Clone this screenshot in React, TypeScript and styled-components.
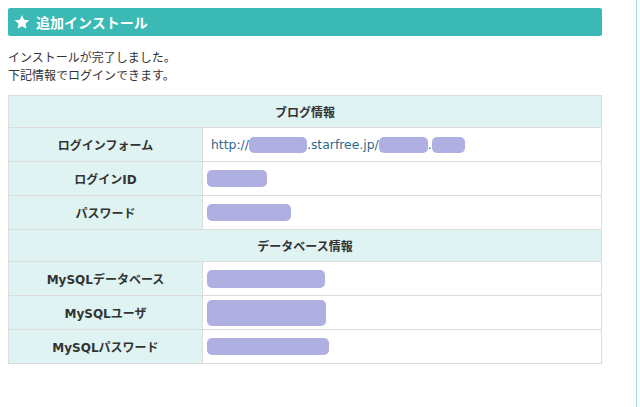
import styled, {createGlobalStyle} from "styled-components";

const GlobalStyle = createGlobalStyle`
  html, body {
    margin: 0;
    padding: 0;
    background: #fff;
  }
  body {
    font-family: "DejaVu Sans", "Noto Sans CJK JP", sans-serif;
    color: #333;
  }
`;

const Page = styled.div`
  display: flex;
  height: 407px;
  overflow: hidden;
`;

const Main = styled.div`
  width: 594px;
  margin: 8px 0 0 8px;
`;

const SideEdge = styled.div`
  flex: 1;
  margin-left: 34px;
  border-left: 1px solid #a6d9e0;
`;

const Heading = styled.h2`
  display: flex;
  align-items: center;
  gap: 6px;
  height: 28px;
  margin: 0;
  padding: 0 6px;
  background: #3bb9b5;
  border-radius: 2px;
  color: #fff;
  font-size: 14px;
  font-weight: bold;
  font-family: "Noto Sans CJK JP", sans-serif;
`;

const Message = styled.p`
  margin: 12px 0 11px;
  font-size: 12px;
  line-height: 18px;
  font-family: "Noto Sans CJK JP", sans-serif;
  color: #333;
`;

const InfoTable = styled.table`
  width: 100%;
  border-collapse: collapse;
  font-size: 12px;
`;

const SectionCell = styled.th`
  height: 31px;
  padding: 0;
  background: #dff3f2;
  border: 1px solid #dcdcdc;
  text-align: center;
  font-weight: bold;
  color: #333;
`;

const LabelCell = styled.th`
  width: 193px;
  height: 33px;
  padding: 0;
  background: #dff3f2;
  border: 1px solid #dcdcdc;
  text-align: center;
  font-weight: bold;
  color: #333;
`;

const ValueCell = styled.td`
  height: 33px;
  padding: 0 4px;
  background: #fff;
  border: 1px solid #dcdcdc;
  vertical-align: middle;
`;

const UrlLine = styled.span`
  display: inline-flex;
  align-items: center;
  padding-left: 4px;
  color: #2f6a8c;
  font-size: 12.4px;
`;

const Blur = styled.span<{$w: number; $h?: number}>`
  display: inline-block;
  vertical-align: middle;
  width: ${(p) => p.$w}px;
  height: ${(p) => p.$h ?? 17}px;
  background: #afafe1;
  border-radius: 5px;
`;

const Star = () => (
  <svg width="16" height="16" viewBox="0 0 24 24" fill="#fff">
    <path d="M12 1.5l3.2 7.1 7.8.8-5.9 5.2 1.7 7.7L12 18.4l-6.8 3.9 1.7-7.7L1 9.4l7.8-.8z" />
  </svg>
);

interface Row {
  label: string;
  blur: number;
  h?: number;
}

const dbRows: Row[] = [
  {label: "MySQLデータベース", blur: 118, h: 18},
  {label: "MySQLユーザ", blur: 119, h: 26},
  {label: "MySQLパスワード", blur: 122, h: 17},
];

const App = () => {
  return (
    <Page>
      <GlobalStyle />
      <Main>
        <Heading>
          <Star />
          追加インストール
        </Heading>
        <Message>
          インストールが完了しました。
          <br />
          下記情報でログインできます。
        </Message>
        <InfoTable>
          <tbody>
            <tr>
              <SectionCell colSpan={2}>ブログ情報</SectionCell>
            </tr>
            <tr>
              <LabelCell>ログインフォーム</LabelCell>
              <ValueCell>
                <UrlLine>
                  http://
                  <Blur $w={58} $h={16} />
                  .starfree.jp/
                  <Blur $w={49} $h={16} />
                  .
                  <Blur $w={33} $h={16} />
                </UrlLine>
              </ValueCell>
            </tr>
            <tr>
              <LabelCell>ログインID</LabelCell>
              <ValueCell>
                <Blur $w={60} />
              </ValueCell>
            </tr>
            <tr>
              <LabelCell>パスワード</LabelCell>
              <ValueCell>
                <Blur $w={84} />
              </ValueCell>
            </tr>
            <tr>
              <SectionCell colSpan={2}>データベース情報</SectionCell>
            </tr>
            {dbRows.map((row) => (
              <tr key={row.label}>
                <LabelCell>{row.label}</LabelCell>
                <ValueCell>
                  <Blur $w={row.blur} $h={row.h} />
                </ValueCell>
              </tr>
            ))}
          </tbody>
        </InfoTable>
      </Main>
      <SideEdge />
    </Page>
  );
};

export default App;
